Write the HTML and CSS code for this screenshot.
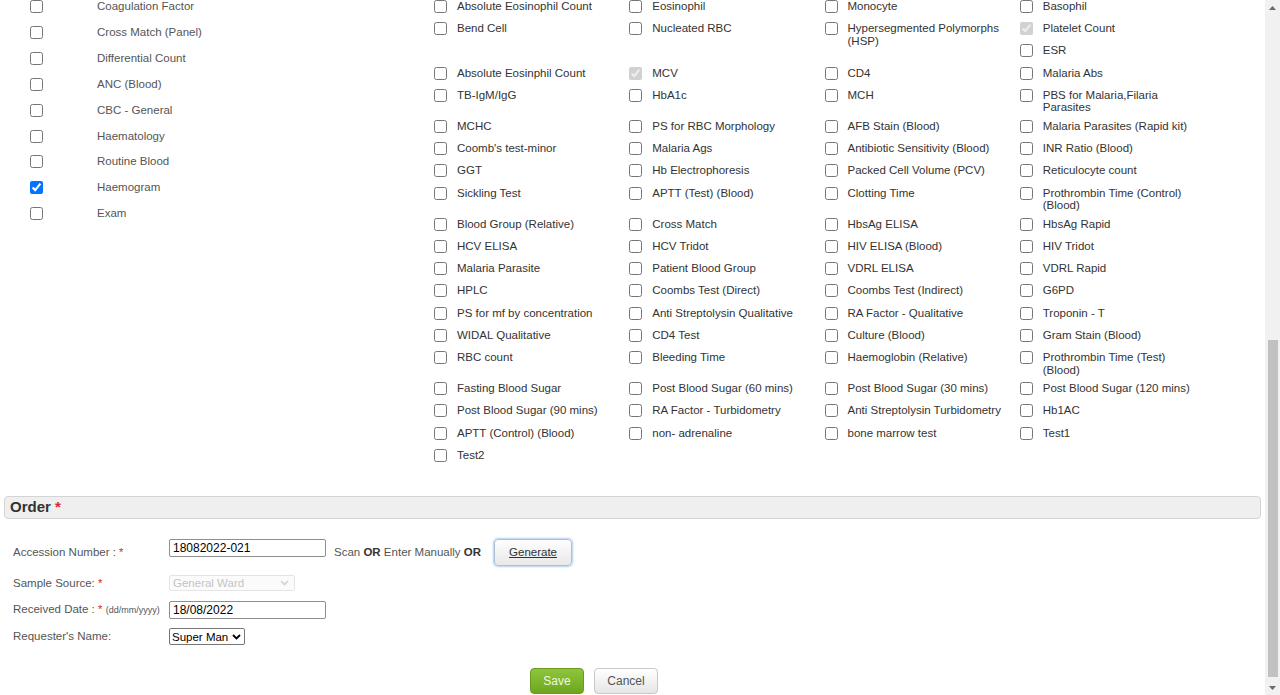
FILE: index.html
```html
<!DOCTYPE html>
<html lang="en">
<head>
<meta charset="utf-8">
<title>Lab Order</title>
<link rel="stylesheet" href="styles.css">
</head>
<body>
<div class="window">
<main class="page">
  <section class="tests">
    <ul class="panels">
      <li class="panel"><input type="checkbox"><span>Coagulation Factor</span></li>
      <li class="panel"><input type="checkbox"><span>Cross Match (Panel)</span></li>
      <li class="panel"><input type="checkbox"><span>Differential Count</span></li>
      <li class="panel"><input type="checkbox"><span>ANC (Blood)</span></li>
      <li class="panel"><input type="checkbox"><span>CBC - General</span></li>
      <li class="panel"><input type="checkbox"><span>Haematology</span></li>
      <li class="panel"><input type="checkbox"><span>Routine Blood</span></li>
      <li class="panel"><input type="checkbox" checked><span>Haemogram</span></li>
      <li class="panel"><input type="checkbox"><span>Exam</span></li>
    </ul>
    <div class="grid">
      <label class="test"><input type="checkbox"><span>Absolute Eosinophil Count</span></label>
      <label class="test"><input type="checkbox"><span>Eosinophil</span></label>
      <label class="test"><input type="checkbox"><span>Monocyte</span></label>
      <label class="test"><input type="checkbox"><span>Basophil</span></label>
      <label class="test"><input type="checkbox"><span>Bend Cell</span></label>
      <label class="test"><input type="checkbox"><span>Nucleated RBC</span></label>
      <label class="test"><input type="checkbox"><span>Hypersegmented Polymorphs (HSP)</span></label>
      <label class="test"><input type="checkbox" checked disabled><span>Platelet Count</span></label>
      <label class="test"><input type="checkbox"><span>ESR</span></label>
      <label class="test"><input type="checkbox"><span>Absolute Eosinphil Count</span></label>
      <label class="test"><input type="checkbox" checked disabled><span>MCV</span></label>
      <label class="test"><input type="checkbox"><span>CD4</span></label>
      <label class="test"><input type="checkbox"><span>Malaria Abs</span></label>
      <label class="test"><input type="checkbox"><span>TB-IgM/IgG</span></label>
      <label class="test"><input type="checkbox"><span>HbA1c</span></label>
      <label class="test"><input type="checkbox"><span>MCH</span></label>
      <label class="test"><input type="checkbox"><span>PBS for Malaria,Filaria Parasites</span></label>
      <label class="test"><input type="checkbox"><span>MCHC</span></label>
      <label class="test"><input type="checkbox"><span>PS for RBC Morphology</span></label>
      <label class="test"><input type="checkbox"><span>AFB Stain (Blood)</span></label>
      <label class="test"><input type="checkbox"><span>Malaria Parasites (Rapid kit)</span></label>
      <label class="test"><input type="checkbox"><span>Coomb's test-minor</span></label>
      <label class="test"><input type="checkbox"><span>Malaria Ags</span></label>
      <label class="test"><input type="checkbox"><span>Antibiotic Sensitivity (Blood)</span></label>
      <label class="test"><input type="checkbox"><span>INR Ratio (Blood)</span></label>
      <label class="test"><input type="checkbox"><span>GGT</span></label>
      <label class="test"><input type="checkbox"><span>Hb Electrophoresis</span></label>
      <label class="test"><input type="checkbox"><span>Packed Cell Volume (PCV)</span></label>
      <label class="test"><input type="checkbox"><span>Reticulocyte count</span></label>
      <label class="test"><input type="checkbox"><span>Sickling Test</span></label>
      <label class="test"><input type="checkbox"><span>APTT (Test) (Blood)</span></label>
      <label class="test"><input type="checkbox"><span>Clotting Time</span></label>
      <label class="test"><input type="checkbox"><span>Prothrombin Time (Control) (Blood)</span></label>
      <label class="test"><input type="checkbox"><span>Blood Group (Relative)</span></label>
      <label class="test"><input type="checkbox"><span>Cross Match</span></label>
      <label class="test"><input type="checkbox"><span>HbsAg ELISA</span></label>
      <label class="test"><input type="checkbox"><span>HbsAg Rapid</span></label>
      <label class="test"><input type="checkbox"><span>HCV ELISA</span></label>
      <label class="test"><input type="checkbox"><span>HCV Tridot</span></label>
      <label class="test"><input type="checkbox"><span>HIV ELISA (Blood)</span></label>
      <label class="test"><input type="checkbox"><span>HIV Tridot</span></label>
      <label class="test"><input type="checkbox"><span>Malaria Parasite</span></label>
      <label class="test"><input type="checkbox"><span>Patient Blood Group</span></label>
      <label class="test"><input type="checkbox"><span>VDRL ELISA</span></label>
      <label class="test"><input type="checkbox"><span>VDRL Rapid</span></label>
      <label class="test"><input type="checkbox"><span>HPLC</span></label>
      <label class="test"><input type="checkbox"><span>Coombs Test (Direct)</span></label>
      <label class="test"><input type="checkbox"><span>Coombs Test (Indirect)</span></label>
      <label class="test"><input type="checkbox"><span>G6PD</span></label>
      <label class="test"><input type="checkbox"><span>PS for mf by concentration</span></label>
      <label class="test"><input type="checkbox"><span>Anti Streptolysin Qualitative</span></label>
      <label class="test"><input type="checkbox"><span>RA Factor - Qualitative</span></label>
      <label class="test"><input type="checkbox"><span>Troponin - T</span></label>
      <label class="test"><input type="checkbox"><span>WIDAL Qualitative</span></label>
      <label class="test"><input type="checkbox"><span>CD4 Test</span></label>
      <label class="test"><input type="checkbox"><span>Culture (Blood)</span></label>
      <label class="test"><input type="checkbox"><span>Gram Stain (Blood)</span></label>
      <label class="test"><input type="checkbox"><span>RBC count</span></label>
      <label class="test"><input type="checkbox"><span>Bleeding Time</span></label>
      <label class="test"><input type="checkbox"><span>Haemoglobin (Relative)</span></label>
      <label class="test"><input type="checkbox"><span>Prothrombin Time (Test) (Blood)</span></label>
      <label class="test"><input type="checkbox"><span>Fasting Blood Sugar</span></label>
      <label class="test"><input type="checkbox"><span>Post Blood Sugar (60 mins)</span></label>
      <label class="test"><input type="checkbox"><span>Post Blood Sugar (30 mins)</span></label>
      <label class="test"><input type="checkbox"><span>Post Blood Sugar (120 mins)</span></label>
      <label class="test"><input type="checkbox"><span>Post Blood Sugar (90 mins)</span></label>
      <label class="test"><input type="checkbox"><span>RA Factor - Turbidometry</span></label>
      <label class="test"><input type="checkbox"><span>Anti Streptolysin Turbidometry</span></label>
      <label class="test"><input type="checkbox"><span>Hb1AC</span></label>
      <label class="test"><input type="checkbox"><span>APTT (Control) (Blood)</span></label>
      <label class="test"><input type="checkbox"><span>non- adrenaline</span></label>
      <label class="test"><input type="checkbox"><span>bone marrow test</span></label>
      <label class="test"><input type="checkbox"><span>Test1</span></label>
      <label class="test"><input type="checkbox"><span>Test2</span></label>
    </div>
  </section>

  <section class="order">
    <h2 class="section-head">Order <span class="req">*</span></h2>
    <div class="form">
      <div class="row row-acc">
        <label class="field-label">Accession Number : <span class="req">*</span></label>
        <input class="text-input acc-input" type="text" value="18082022-021">
        <span class="hint">Scan <b>OR</b> Enter Manually <b>OR</b></span>
        <button class="btn-gen" type="button">Generate</button>
      </div>
      <div class="row row-mid">
        <label class="field-label">Sample Source: <span class="req">*</span></label>
        <select class="sel sel-source" disabled><option>General Ward</option></select>
      </div>
      <div class="row row-mid">
        <label class="field-label">Received Date : <span class="req">*</span> <small class="fmt">(dd/mm/yyyy)</small></label>
        <input class="text-input" type="text" value="18/08/2022">
      </div>
      <div class="row row-last">
        <label class="field-label">Requester's Name:</label>
        <select class="sel sel-req"><option>Super Man</option></select>
      </div>
    </div>
    <div class="actions">
      <button class="btn btn-save" type="button">Save</button>
      <button class="btn btn-cancel" type="button">Cancel</button>
    </div>
  </section>
</main>
<div class="scrollbar" aria-hidden="true">
  <span class="sb-btn"><svg width="7" height="4" viewBox="0 0 7 4"><path d="M0 4 L3.5 0 L7 4 Z" fill="#6b6b6b"/></svg></span>
  <div class="sb-track"><div class="sb-thumb"></div></div>
  <span class="sb-btn"><svg width="7" height="4" viewBox="0 0 7 4"><path d="M0 0 L7 0 L3.5 4 Z" fill="#6b6b6b"/></svg></span>
</div>
</div>
</body>
</html>
```

FILE: styles.css
```css
body {
  margin: 0;
  font-family: "Liberation Sans", Arial, sans-serif;
  font-size: 11.5px;
  color: #555;
  background: #fff;
}

.window {
  display: flex;
  height: 695px;
  overflow: hidden;
}

.page {
  flex: 1 1 auto;
  min-width: 0;
}

/* window scrollbar (page is shown scrolled to its end) */
.scrollbar {
  flex: 0 0 15px;
  display: flex;
  flex-direction: column;
  background: #f1f1f1;
}

.sb-btn {
  height: 15px;
  flex: none;
  display: flex;
  align-items: center;
  justify-content: center;
}

.sb-track {
  flex: 1 1 auto;
}

.sb-thumb {
  margin: 325px 2px 0 3px;
  height: 337px;
  background: #c1c1c1;
}

.tests {
  display: flex;
  margin-top: -7px;
}

.panels {
  list-style: none;
  margin: 0;
  padding: 0.75px 0 0 30px;
  flex: 0 0 430px;
  box-sizing: border-box;
}

.panel {
  display: flex;
  align-items: center;
  height: 25.875px;
}

.panel input {
  margin: 0 54px 0 0;
  width: 13px;
  height: 13px;
  flex: none;
}

.panel span {
  line-height: 13px;
  color: #555;
}

.grid {
  flex: 0 0 781px;
  padding-top: 3.75px;
  display: flow-root;
  color: #333;
}

.test {
  float: left;
  width: 25%;
  box-sizing: border-box;
  min-height: 22.25px;
  padding: 3px 0;
  display: flex;
  align-items: flex-start;
}

.test input {
  margin: 0 10px 0 4px;
  width: 13px;
  height: 13px;
  flex: none;
}

.test span {
  width: 160px;
  line-height: 12.5px;
}

.order {
  margin-top: 28px;
}

.section-head {
  margin: 0 4px;
  height: 23px;
  box-sizing: border-box;
  padding: 0 5px;
  border: 1px solid #d4d4d4;
  border-radius: 4px;
  background: #efefef;
  font-size: 15px;
  font-weight: bold;
  line-height: 20px;
  color: #333;
}

.req {
  color: #e3262b;
}

.form {
  padding: 15.5px 0 0 13px;
}

.row {
  display: flex;
  align-items: center;
}

.row-acc {
  height: 35px;
}

.row-mid {
  height: 27px;
}

.row-last {
  height: 26px;
}

.field-label {
  width: 156px;
  flex: none;
  line-height: 13px;
  color: #555;
}

.fmt {
  font-size: 9px;
}

.text-input {
  width: 157px;
  height: 18px;
  box-sizing: border-box;
  margin: 0;
  padding: 0 3px;
  border: 1px solid #8e8e8e;
  border-radius: 2px;
  font: 12px "Liberation Sans", Arial, sans-serif;
  color: #000;
}

.acc-input {
  align-self: flex-start;
  margin-top: 4.5px;
}

.hint {
  margin-left: 8px;
  color: #555;
}

.hint b {
  color: #333;
}

.btn-gen {
  margin-left: 13px;
  width: 78px;
  height: 27px;
  padding: 0;
  border: 1px solid #a9c0d8;
  border-radius: 4px;
  background: linear-gradient(#fefefe, #e8e8e8);
  box-shadow: 0 0 2px 1px rgba(120, 170, 220, 0.55);
  font: 11.5px "Liberation Sans", Arial, sans-serif;
  color: #333;
  text-decoration: underline;
}

.sel {
  appearance: none;
  -webkit-appearance: none;
  margin: 0;
  padding: 0 0 0 2px;
  box-sizing: border-box;
  border-radius: 2px;
  font: 11.5px "Liberation Sans", Arial, sans-serif;
  background-repeat: no-repeat;
}

.sel-source {
  width: 126px;
  height: 16px;
  padding-left: 3px;
  color: #aaa;
  border: 1px solid #dadada;
  background-color: #fafafa;
  background-image: url("data:image/svg+xml,%3Csvg xmlns='http://www.w3.org/2000/svg' width='9' height='6' viewBox='0 0 9 6'%3E%3Cpath d='M1 1 L4.5 4.5 L8 1' fill='none' stroke='%23bdbdbd' stroke-width='1.6'/%3E%3C/svg%3E");
  background-position: right 5px center;
}

.sel-req {
  width: 76px;
  height: 17px;
  color: #000;
  border: 1px solid #767676;
  background-color: #fff;
  background-image: url("data:image/svg+xml,%3Csvg xmlns='http://www.w3.org/2000/svg' width='9' height='6' viewBox='0 0 9 6'%3E%3Cpath d='M1 1 L4.5 4.5 L8 1' fill='none' stroke='%23000' stroke-width='1.8'/%3E%3C/svg%3E");
  background-position: right 3px center;
}

.actions {
  width: 1188px;
  margin-top: 18.5px;
  display: flex;
  justify-content: center;
  gap: 10px;
}

.btn {
  height: 26px;
  padding: 0;
  border-radius: 4px;
  font: 12px "Liberation Sans", Arial, sans-serif;
}

.btn-save {
  width: 54px;
  border: 1px solid #6b9a1f;
  background: linear-gradient(#8dc53c, #6fa620);
  color: #eef7df;
}

.btn-cancel {
  width: 64px;
  border: 1px solid #c8c8c8;
  background: linear-gradient(#ffffff, #e6e6e6);
  color: #555;
}
```
